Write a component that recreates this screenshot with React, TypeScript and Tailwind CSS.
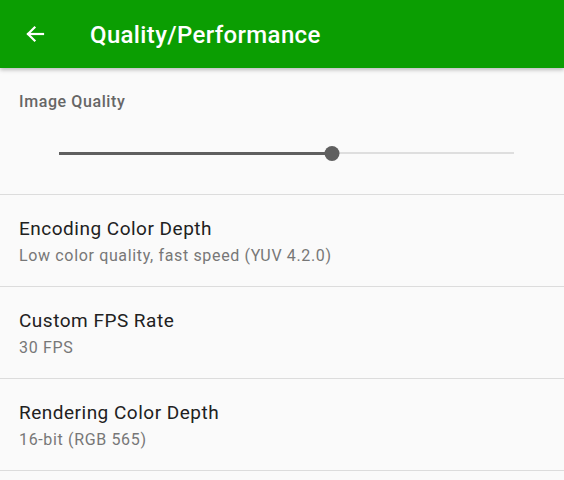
import React from "react";

const rows = [
  { title: "Encoding Color Depth", sub: "Low color quality, fast speed (YUV 4.2.0)" },
  { title: "Custom FPS Rate", sub: "30 FPS" },
  { title: "Rendering Color Depth", sub: "16-bit (RGB 565)" },
];

const App = () => {
  const value = 0.6;
  return (
    <div className="w-[564px] h-[480px] overflow-hidden bg-[#fafafa] font-['Roboto',sans-serif]">
      {/* Toolbar */}
      <div className="relative z-10 flex items-center h-[68px] bg-[#0b9e02] shadow-[0_2px_4px_rgba(0,0,0,0.25)]">
        <button className="ml-[22px] w-[26px] h-[26px] flex items-center justify-center text-white">
          <svg width="24" height="24" viewBox="0 0 24 24" fill="none" stroke="currentColor" strokeWidth="2.2" strokeLinecap="square">
            <path d="M20 12H5" />
            <path d="M11.5 5.5L5 12l6.5 6.5" />
          </svg>
        </button>
        <h1 className="ml-[42px] mt-[2px] text-white text-[24px] font-medium tracking-[0.35px]">Quality/Performance</h1>
      </div>

      {/* Image quality slider */}
      <div className="border-b border-[#dcdcdc] pt-[24px] h-[127px]">
        <div className="px-[19px] text-[16px] leading-5 font-medium tracking-[0.6px] text-[#666666]">Image Quality</div>
        <div className="ml-[59px] mr-[50px] mt-[34px] relative h-[14px] flex items-center">
          <div className="h-[2px] w-full bg-[#dedede]" />
          <div className="absolute left-0 h-[3px] bg-[#5f5f5f]" style={{ width: `${value * 100}%` }} />
          <div
            className="absolute w-[15px] h-[15px] rounded-full bg-[#5f5f5f] -translate-x-1/2"
            style={{ left: `${value * 100}%` }}
          />
        </div>
      </div>

      {/* Preference rows */}
      {rows.map((r) => (
        <div key={r.title} className="border-b border-[#dcdcdc] px-[19px] pt-[22px] pb-[20px]">
          <div className="text-[19px] leading-6 tracking-[0.5px] text-[#212121]">{r.title}</div>
          <div className="mt-[5px] text-[16px] leading-5 tracking-[0.65px] text-[#777777]">{r.sub}</div>
        </div>
      ))}
    </div>
  );
};

export default App;
